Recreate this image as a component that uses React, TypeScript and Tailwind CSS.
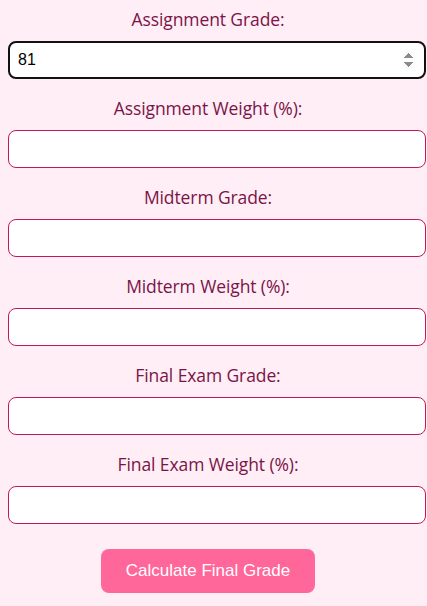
import React, { useState } from 'react';

const fields = [
  { key: 'assignmentGrade', label: 'Assignment Grade:' },
  { key: 'assignmentWeight', label: 'Assignment Weight (%):' },
  { key: 'midtermGrade', label: 'Midterm Grade:' },
  { key: 'midtermWeight', label: 'Midterm Weight (%):' },
  { key: 'finalGrade', label: 'Final Exam Grade:' },
  { key: 'finalWeight', label: 'Final Exam Weight (%):' },
];

export default function App() {
  const [values, setValues] = useState<Record<string, string>>({ assignmentGrade: '81' });

  return (
    <div className="min-h-screen bg-[#ffeef5] px-[8px] pt-[7px] pb-[13px] overflow-hidden">
      {fields.map((f, i) => (
        <div key={f.key} className={i === 0 ? '' : 'mt-[17px]'}>
          <label
            htmlFor={f.key}
            className="block text-center pr-[11px] text-[17.5px] leading-[24px] mb-[10px] text-[#7a1448] font-['Open_Sans',sans-serif] tracking-[-0.1px]"
          >
            {f.label}
          </label>
          <input
            id={f.key}
            type="number"
            autoFocus={i === 0}
            value={values[f.key] ?? ''}
            onChange={(e) => setValues({ ...values, [f.key]: e.target.value })}
            className={
              'block w-[418px] h-[38px] rounded-[8px] bg-white px-[8px] text-[16px] text-black font-["Liberation_Sans",Arial,sans-serif] ' +
              (i === 0 ? 'border-2 border-[#111] outline-none' : 'border border-[#c2185b] focus:outline-none')
            }
          />
        </div>
      ))}
      <div className="flex justify-center pr-[11px] mt-[25px]">
        <button className="h-[44px] w-[214px] rounded-[8px] bg-[#ff6699] text-white text-[17px] font-['Liberation_Sans',Arial,sans-serif]">
          Calculate Final Grade
        </button>
      </div>
    </div>
  );
}
